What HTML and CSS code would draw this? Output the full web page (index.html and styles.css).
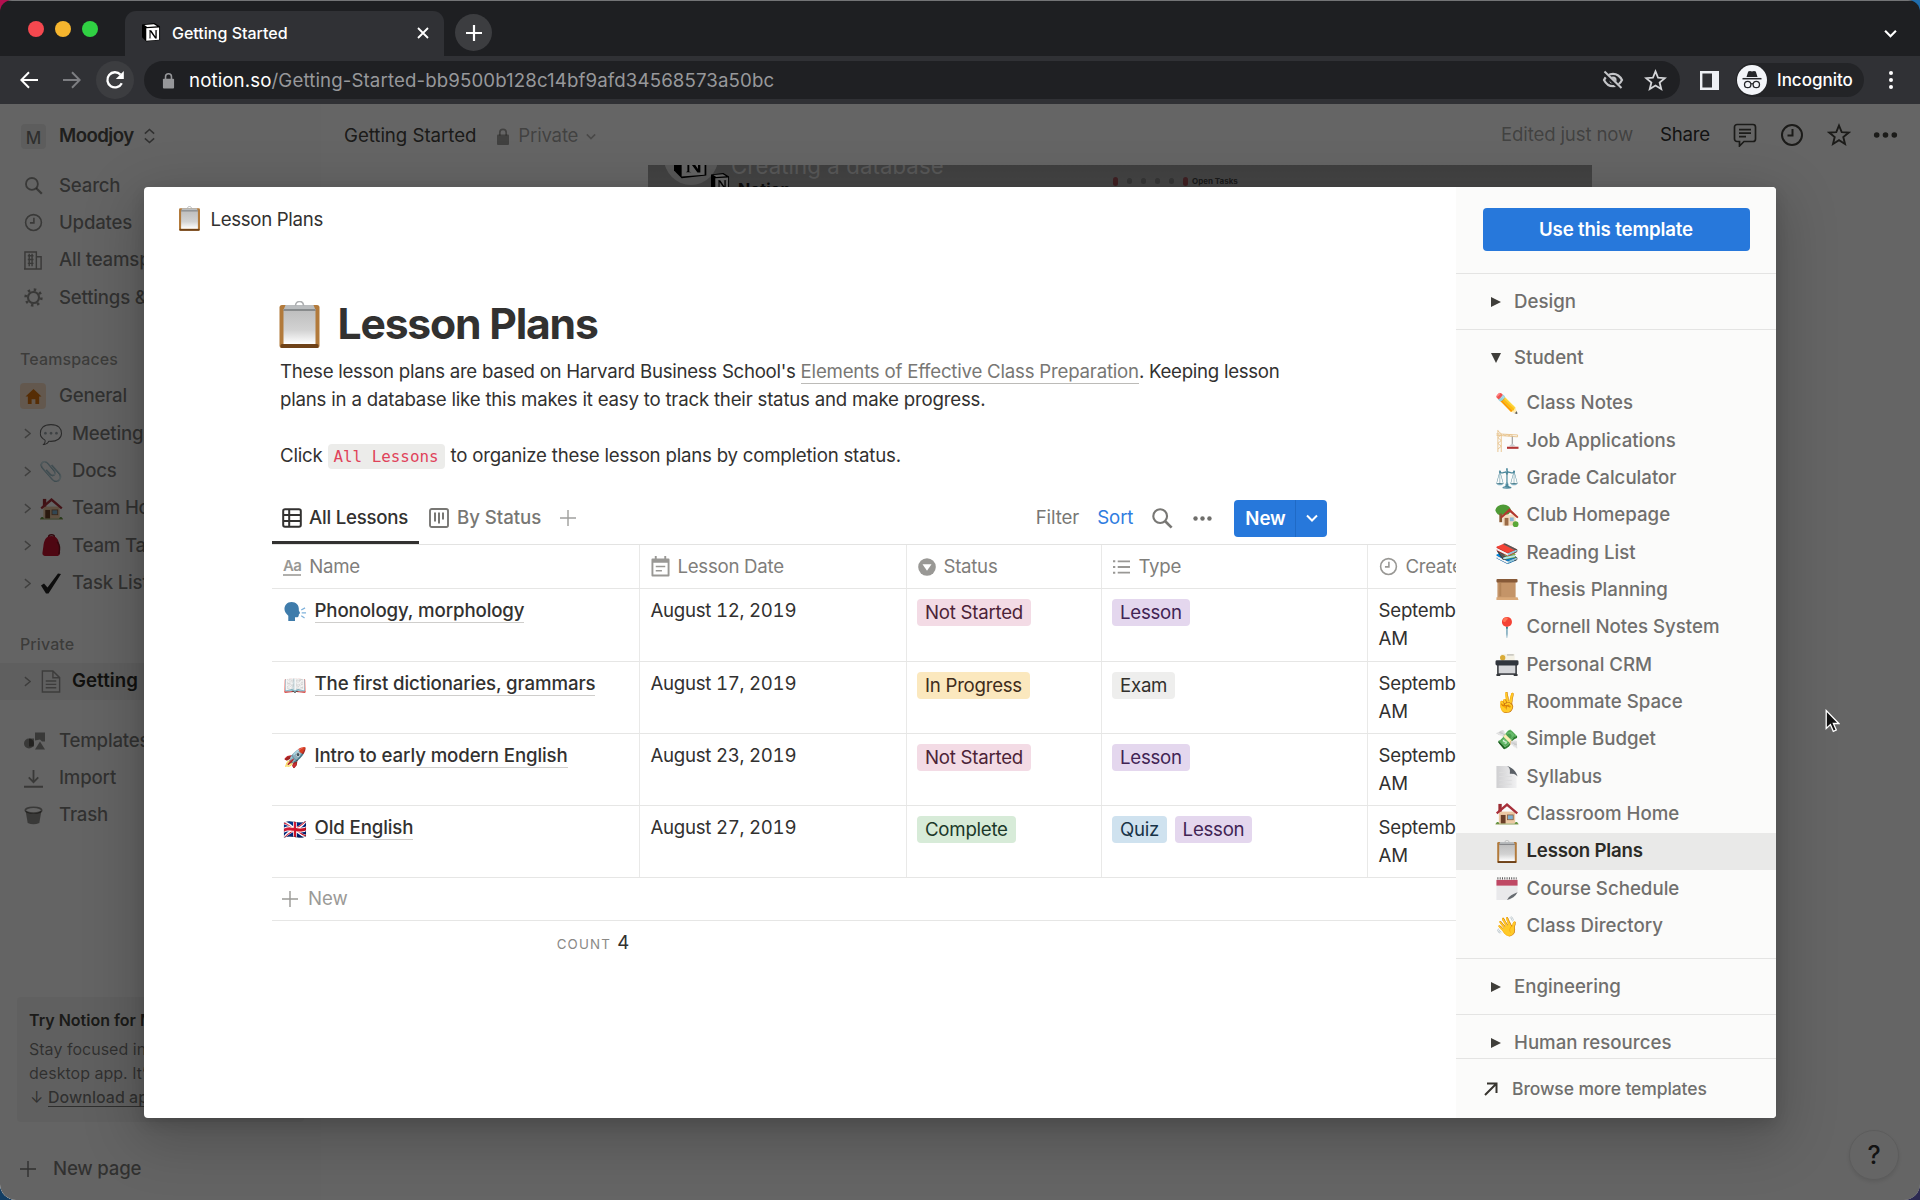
FILE: index.html
```html
<!DOCTYPE html>
<html lang="en">
<head>
<meta charset="utf-8">
<title>Getting Started</title>
<link rel="stylesheet" href="styles.css">
</head>
<body>
<svg class="defs" aria-hidden="true">
  <defs>
    <linearGradient id="paper" x1="0" y1="0" x2="0" y2="1"><stop offset="0" stop-color="#bdbdbd"/><stop offset=".6" stop-color="#d2d2d2"/><stop offset="1" stop-color="#fff"/></linearGradient>
    <linearGradient id="sheet" x1="0" y1="0" x2="1" y2="0"><stop offset="0" stop-color="#cfcfd1"/><stop offset="1" stop-color="#f1f1f2"/></linearGradient>
  </defs>
  <symbol id="clipboard" viewBox="0 0 40 47">
    <rect x="0" y="4" width="40" height="43" rx="2.5" fill="#b27a3b"/>
    <rect x="1" y="43" width="38" height="4" rx="1.5" fill="#6f4218"/>
    <rect x="4" y="8" width="32" height="35" fill="url(#paper)"/>
    <path d="M6 4h28l2 5H4z" fill="#b9bcbe"/><path d="M4 9h32" stroke="#55585a" stroke-width="1.2"/>
    <path d="M16 5c0-6 8-6 8 0" fill="none" stroke="#aeb0b2" stroke-width="1.6"/>
  </symbol>
  <symbol id="scroll" viewBox="0 0 24 24">
    <rect x="2" y="2" width="19" height="20" fill="#c49468"/><rect x="1" y="1" width="22" height="3.6" rx="1" fill="#875a38"/><path d="M1 20h22l1 3H1z" fill="#d9a878"/><path d="M5 5v14" stroke="#b38458" stroke-width="2"/>
  </symbol>
  <symbol id="cards" viewBox="0 0 24 24">
    <rect x="6" y="1" width="14" height="9" fill="#f4f1e4"/><circle cx="7.5" cy="5" r="2.8" fill="#d9ab36"/><path d="M12 2h7" stroke="#999" stroke-width=".8"/>
    <rect x="2.5" y="11" width="19" height="11" fill="#d5d6d9" stroke="#34373b" stroke-width="1.6"/><rect x="0" y="7.5" width="24" height="5.5" rx="1.5" fill="#30353c"/><path d="M1 23h4M19 23h4" stroke="#34373b" stroke-width="2"/>
  </symbol>
  <symbol id="curl" viewBox="0 0 24 24">
    <path d="M1 1h12l9 9v14H1z" fill="url(#sheet)"/><path d="M12 1c4 2 3 6 3 8 3 0 6 0 8 3-1-5-6-10-11-11z" fill="#5b6066"/><path d="M4 8h7M4 12h13M4 16h13M4 20h13" stroke="#dcdcde" stroke-width="1"/>
  </symbol>
  <symbol id="pad" viewBox="0 0 24 24">
    <path d="M1 3h22v13l-8 8H1z" fill="#e9e9eb"/><rect x="1" y="3" width="22" height="6" fill="#bf4864"/><path d="M2 1.5h20" stroke="#555" stroke-width="2.4" stroke-dasharray="1 1.4"/><path d="M12 24c2-4 6-6 11-8-2 4-6 7-11 8z" fill="#666b70"/>
  </symbol>
  <symbol id="crane" viewBox="0 0 24 24">
    <path d="M2.5 24V1M6 24V5M2.5 2L6 5M2.5 9L6 6M2.5 9L6 12M2.5 15L6 12M2.5 15L6 18M2.5 21L6 18M1 5l22 1.2v2L1 6.5M8 5.500l2 1.500 2-1.300 2 1.500 2-1.300 2 1.500" fill="none" stroke="#e8c48f" stroke-width="1"/>
    <path d="M17.500 8v10" stroke="#888" stroke-width="1"/><path d="M14 18l3.500-3 3.500 3z" fill="#c9cdd0"/><rect x="12" y="18.500" width="12" height="2.200" fill="#b23535"/>
  </symbol>
  <symbol id="house" viewBox="0 0 24 24">
    <rect x="3.500" y="10" width="17" height="12.500" fill="#ecc9a4"/><rect x="3" y="2" width="3.500" height="8" fill="#9c2c33"/><path d="M12 1l11.500 10-1.500 1.800L12 4.500 2 12.800.500 11z" fill="#a8303a"/><rect x="5.500" y="13.500" width="5" height="9" fill="#6b3f28"/><rect x="12.500" y="13.500" width="6" height="5" fill="#7fb0cf" stroke="#8a5a3a" stroke-width=".8"/><path d="M.5 23c0-3 3.500-3 3.500 0zM20 23c0-3 3.500-3 3.500 0z" fill="#4d8a2e"/><path d="M0 23h24" stroke="#8fa05a" stroke-width="1"/>
  </symbol>
  <symbol id="garden" viewBox="0 0 24 24">
    <ellipse cx="8" cy="6.500" rx="8" ry="6" fill="#4e9a35"/><path d="M4 10h3v9H4z" fill="#8a5a33"/><rect x="7.500" y="11" width="13.500" height="11.500" fill="#f3dcc0"/><path d="M14.500 4.500L24 13.500l-1.300 1.300L14.500 8 6.500 14.800 5.300 13.500z" fill="#b2382f"/><rect x="9.500" y="14.500" width="4" height="8" fill="#9b6a45"/><rect x="15" y="14" width="4" height="4" fill="#8ab7d6"/><circle cx="21" cy="21" r="3" fill="#5aa838"/>
  </symbol>
  <symbol id="talk" viewBox="0 0 24 24">
    <path d="M8.500 2C3.500 2 1 5.500 1 9.500c0 3 2 5 4 7V22h7v-4c3 .5 4-.5 4-3l1.300-1.500-1.300-2.500C16.500 5 13 2 8.500 2z" fill="#3f7cab"/><path d="M18.500 10.500l4-2.300M19 13.500h4.500M18.500 16.500l3.500 2.300" stroke="#7fb2dc" stroke-width="1.300"/>
  </symbol>
  <symbol id="notion" viewBox="0 0 20 20">
    <path d="M0 1.500L13 0l6 3.800V18l-14.500 1.500L0 15z" fill="#000"/><path d="M2.500 2.200l10-.8 3.500 2.100-10.500.7z" fill="#fff"/><path d="M4.500 5.500L18 4.800V17.500L4.500 18.600z" fill="#fff"/>
    <path d="M7 7.700h2.700l4.400 6.400V8l-1.300-.3h3.600l-.9.500v8h-1.700L9 9.600v6.100l1.300.4H7l.9-.6V8.200z" fill="#000"/>
  </symbol>
  <symbol id="star" viewBox="0 0 24 24"><path d="M12 2.500l2.700 6.600 7 .5-5.400 4.500 1.700 6.900-6-3.800-6 3.800 1.700-6.900L2.300 9.600l7-.5z" fill="none" stroke="currentColor" stroke-width="1.900" stroke-linejoin="miter"/></symbol>
  <symbol id="clock" viewBox="0 0 24 24"><circle cx="12" cy="12" r="10" fill="none" stroke="currentColor" stroke-width="2"/><path d="M12.500 6v6.500H7.500" fill="none" stroke="currentColor" stroke-width="2"/></symbol>
  <symbol id="search" viewBox="0 0 24 24"><circle cx="10" cy="10" r="7.500" fill="none" stroke="currentColor" stroke-width="2.300"/><path d="M15.500 15.500l7 7" stroke="currentColor" stroke-width="2.900"/></symbol>
  <symbol id="dots" viewBox="0 0 24 8"><g fill="currentColor"><circle cx="3.200" cy="4" r="2.800"/><circle cx="12" cy="4" r="2.800"/><circle cx="20.800" cy="4" r="2.800"/></g></symbol>
  <symbol id="plus" viewBox="0 0 18 18"><path d="M9 0v18M0 9h18" stroke="currentColor" stroke-width="1.600"/></symbol>
  <symbol id="right" viewBox="0 0 8 12"><path d="M1 1l6 5-6 5" fill="none" stroke="currentColor" stroke-width="1.500"/></symbol>
  <symbol id="down" viewBox="0 0 12 8"><path d="M1 1.500l5 5 5-5" fill="none" stroke="currentColor" stroke-width="2"/></symbol>
  <symbol id="lock" viewBox="0 0 14 18"><rect x="1" y="7" width="12" height="10.500" rx="1" fill="currentColor"/><path d="M3.800 8V5a3.200 3.200 0 0 1 6.400 0v3" fill="none" stroke="currentColor" stroke-width="1.700"/></symbol>
</svg>

<div class="window">
  <header class="tabstrip">
    <div class="lights"><i class="red"></i><i class="amber"></i><i class="green"></i></div>
    <div class="tab">
      <svg class="favicon"><use href="#notion"/></svg>
      <span>Getting Started</span>
      <svg class="tab-close" viewBox="0 0 12 12"><path d="M1 1l10 10M11 1L1 11" stroke="#fff" stroke-width="1.800"/></svg>
    </div>
    <div class="new-tab"><svg viewBox="0 0 16 16"><path d="M8 0v16M0 8h16" stroke="#fff" stroke-width="2.200"/></svg></div>
    <svg class="strip-chevron"><use href="#down"/></svg>
  </header>
  <div class="toolbar">
    <svg class="nav back" viewBox="0 0 18 18"><path d="M18 9H2M9 1.200L1.300 9 9 16.800" fill="none" stroke="#fff" stroke-width="2"/></svg>
    <svg class="nav forward" viewBox="0 0 18 18"><path d="M0 9h16M9 1.200L16.700 9 9 16.800" fill="none" stroke="#7d7e82" stroke-width="2"/></svg>
    <div class="reload"><svg viewBox="0 0 20 20"><path d="M16.800 13.200A7.600 7.600 0 1 1 15.500 4.600" fill="none" stroke="#fff" stroke-width="2.300"/><path d="M18.800 1v8h-8z" fill="#fff"/></svg></div>
    <div class="omnibox">
      <svg class="url-lock"><use href="#lock"/></svg>
      <span class="url"><b>notion.so</b>/Getting-Started-bb9500b128c14bf9afd34568573a50bc</span>
      <svg class="eye" viewBox="0 0 22 20"><path d="M2 10c2-4 5.500-6.200 9-6.200S18 6 20 10c-2 4-5.500 6.200-9 6.200S4 14 2 10z" fill="none" stroke="currentColor" stroke-width="2.200"/><circle cx="11" cy="10" r="3.600" fill="currentColor"/><path d="M1.500 2.500l17 16" stroke="#1f2023" stroke-width="4"/><path d="M2.500 1.500l17 16.500" stroke="currentColor" stroke-width="2"/></svg>
      <svg class="bookmark"><use href="#star"/></svg>
    </div>
    <svg class="panel-icon" viewBox="0 0 19 19"><path d="M1.200 1.200h16.600v16.600H1.200z" fill="none" stroke="#eef0f4" stroke-width="2.400"/><path d="M12 0h7v19h-7z" fill="#eef0f4"/></svg>
    <div class="profile">
      <svg viewBox="0 0 30 30"><circle cx="15" cy="15" r="15" fill="#f3f5f9"/><path d="M9.500 12l1.700-5.500 1.800-.5 2 .6 2-.6 1.800.5L20.500 12z" fill="#25272b"/><path d="M5.500 13.700h19" stroke="#25272b" stroke-width="1.500"/><g fill="none" stroke="#25272b" stroke-width="1.300"><circle cx="10.700" cy="19.500" r="3.200"/><circle cx="19.300" cy="19.500" r="3.200"/><path d="M13.900 19q1.100-.8 2.200 0"/></g></svg>
      <span>Incognito</span>
    </div>
    <svg class="kebab" viewBox="0 0 6 20"><g fill="#fff"><circle cx="3" cy="3" r="2"/><circle cx="3" cy="10" r="2"/><circle cx="3" cy="17" r="2"/></g></svg>
  </div>

  <div class="app">
    <aside class="sidebar">
      <div class="workspace"><span class="badge">M</span><strong>Moodjoy</strong>
        <svg viewBox="0 0 14 18"><path d="M2 6.500L7 2l5 4.500M2 11.500L7 16l5-4.500" fill="none" stroke="currentColor" stroke-width="1.700"/></svg></div>
      <div class="row"><svg class="ic"><use href="#search"/></svg>Search</div>
      <div class="row"><svg class="ic"><use href="#clock"/></svg>Updates</div>
      <div class="row"><svg class="ic" viewBox="0 0 20 20"><path d="M1 19V1h12v18zM13 6h5v13H0M4 5h6M4 9h6M4 13h6M5.500 3v13M8.500 3v13" fill="none" stroke="currentColor" stroke-width="1.500"/></svg>All teamspaces</div>
      <div class="row"><svg class="ic" viewBox="0 0 20 20"><circle cx="10" cy="10" r="5.800" fill="none" stroke="currentColor" stroke-width="2.200"/><circle cx="10" cy="10" r="8.300" fill="none" stroke="currentColor" stroke-width="2.700" stroke-dasharray="2.600 3.919"/></svg>Settings &amp; members</div>
      <div class="label">Teamspaces</div>
      <div class="row"><span class="home"><svg viewBox="0 0 18 18"><path d="M9 1l8.500 8H15v8h-4v-5H7v5H3V9H.5z" fill="#d9730d"/></svg></span>General</div>
      <div class="tree">
        <div class="row"><svg class="arrow"><use href="#right"/></svg><i class="emoji">💬</i>Meetings</div>
        <div class="row"><svg class="arrow"><use href="#right"/></svg><i class="emoji">📎</i>Docs</div>
        <div class="row"><svg class="arrow"><use href="#right"/></svg><svg class="emo"><use href="#house"/></svg>Team Home</div>
        <div class="row"><svg class="arrow"><use href="#right"/></svg><svg class="emo" viewBox="0 0 24 24"><path d="M9 3c0-3 6-3 6 0" fill="none" stroke="#7a1420" stroke-width="1.500"/><path d="M12 2C6 2 4 7 3.500 13L2.500 20c0 2.500 2 3 4 3h10c3 0 4.500-1 4.500-4L20 11c-.8-6-3-9-8-9z" fill="#c4122f"/><path d="M18 8c2.500 3 3 8 1.500 13" fill="none" stroke="#7a1420" stroke-width="1.500"/></svg>Team Tasks</div>
        <div class="row"><svg class="arrow"><use href="#right"/></svg><svg class="check" viewBox="0 0 22 22"><path d="M1 13l3-2 3.500 4L18 1l3 .5L8.500 21H6z" fill="#222"/></svg>Task List</div>
      </div>
      <div class="label private">Private</div>
      <div class="tree"><div class="row active"><svg class="arrow"><use href="#right"/></svg><svg class="page" viewBox="0 0 22 24"><path d="M2 1h11l7 7v15H2zM13 1v7h7M5.500 11.500h11M5.500 15h11M5.500 18.500h11" fill="none" stroke="currentColor" stroke-width="1.500"/></svg>Getting Started</div></div>
      <div class="row first-tool"><svg class="ic wide" viewBox="0 0 22 18"><path d="M11 1h10v9h-3l-2-2-5 1z" fill="currentColor"/><circle cx="5" cy="12" r="5" fill="currentColor"/><path d="M5 7h5v8H5zM16 10l5 8H11z" fill="currentColor"/></svg>Templates</div>
      <div class="row"><svg class="ic" viewBox="0 0 18 18"><path d="M9 1v11M4.500 8L9 12.500 13.500 8M0 16.800h18" fill="none" stroke="currentColor" stroke-width="1.700"/></svg>Import</div>
      <div class="row"><svg class="ic" viewBox="0 0 18 18"><ellipse cx="9" cy="4" rx="7.800" ry="2.800" fill="none" stroke="currentColor" stroke-width="1.600"/><path d="M1.500 4.500L3.500 16q5.500 2.500 11 0l2-11.500q-7.500 5-15 0z" fill="currentColor"/></svg>Trash</div>
      <div class="promo"><strong>Try Notion for Mac</strong><p>Stay focused in our fast<br>desktop app. It’s free.<br><span class="dl">↓</span><u>Download app</u></p></div>
      <div class="new-page"><svg><use href="#plus"/></svg>New page</div>
    </aside>

    <main class="page-area">
      <div class="topbar">
        <span class="crumb">Getting Started</span>
        <svg class="crumb-lock"><use href="#lock"/></svg><span class="faint">Private</span><svg class="crumb-down"><use href="#down"/></svg>
        <div class="actions">
          <span class="edited">Edited just now</span>
          <span class="share">Share</span>
          <svg class="tb" viewBox="0 0 24 24"><path d="M4 1.500h16a2.500 2.500 0 0 1 2.500 2.500v12a2.500 2.500 0 0 1-2.500 2.500H11L6.500 23v-4.500H4A2.500 2.500 0 0 1 1.500 16V4A2.500 2.500 0 0 1 4 1.500zM6 6.700h12M6 10.200h12M6 13.700h7" fill="none" stroke="currentColor" stroke-width="1.700"/></svg>
          <svg class="tb"><use href="#clock"/></svg>
          <svg class="tb"><use href="#star"/></svg>
          <svg class="tb-dots"><use href="#dots"/></svg>
        </div>
      </div>
      <div class="cover">
        <div class="avatar"><svg><use href="#notion"/></svg></div>
        <div class="cover-text"><span>Creating a database</span><b><svg><use href="#notion"/></svg>Notion</b></div>
        <div class="cover-bits"><i></i><i class="g"></i><i class="g"></i><i class="g"></i><i class="g"></i><i></i><b>Open Tasks</b></div>
      </div>
    </main>
    <div class="help">?</div>

    <div class="overlay">
      <section class="modal">
        <div class="preview">
          <div class="preview-head"><svg><use href="#clipboard"/></svg>Lesson Plans</div>
          <h1><svg><use href="#clipboard"/></svg>Lesson Plans</h1>
          <p class="intro">These lesson plans are based on Harvard Business School's <a>Elements of Effective Class Preparation</a>. Keeping lesson<br><span>plans in a database like this makes it easy to track their status and make progress.</span></p>
          <p class="hint">Click <code>All Lessons</code> to organize these lesson plans by completion status.</p>

          <div class="views">
            <div class="view current"><svg viewBox="0 0 20 20"><path d="M3 1.200h14A1.800 1.800 0 0 1 18.800 3v14a1.800 1.800 0 0 1-1.800 1.800H3A1.800 1.800 0 0 1 1.200 17V3A1.800 1.800 0 0 1 3 1.200zM1.200 7h17.600M1.200 13h17.600M7.200 1.200v17.600" fill="none" stroke="currentColor" stroke-width="2"/></svg>All Lessons</div>
            <div class="view"><svg viewBox="0 0 20 20"><rect x="1" y="1" width="18" height="18" rx="1.800" fill="none" stroke="currentColor" stroke-width="1.900"/><path d="M6 4.500v9M10 4.500v11M14 4.500v7" stroke="currentColor" stroke-width="2"/></svg>By Status</div>
            <svg class="add-view"><use href="#plus"/></svg>
            <span class="filter">Filter</span><span class="sort">Sort</span>
            <svg class="find"><use href="#search"/></svg><svg class="more"><use href="#dots"/></svg>
            <div class="new-btn"><span>New</span><i><svg><use href="#down"/></svg></i></div>
          </div>

          <div class="table">
            <div class="tr th">
              <div><span class="aa">Aa</span>Name</div>
              <div><svg viewBox="0 0 20 22"><path d="M1.500 3.500h17v17h-17z" fill="none" stroke="currentColor" stroke-width="2" stroke-linejoin="round"/><path d="M1.500 3h17v4h-17zM4 0h2v4H4zM14 0h2v4h-2z" fill="currentColor"/><path d="M5 11h10M5 15.500h6.500" stroke="currentColor" stroke-width="1.700"/></svg>Lesson Date</div>
              <div><svg class="sel" viewBox="0 0 18 18"><circle cx="9" cy="9" r="8.800" fill="currentColor"/><path d="M4.500 6.300h9L9 12.800z" fill="#fff"/></svg>Status</div>
              <div><svg class="list" viewBox="0 0 18 16"><path d="M5 2h13M5 8h13M5 14h13" stroke="currentColor" stroke-width="2"/><path d="M0 2h2.400M0 8h2.400M0 14h2.400" stroke="currentColor" stroke-width="2.200"/></svg>Type</div>
              <div><svg><use href="#clock"/></svg>Created</div>
            </div>
            <div class="tr lead"><div><svg class="emo"><use href="#talk"/></svg><span class="name">Phonology, morphology</span></div><div>August 12, 2019</div><div><span class="tag pink">Not Started</span></div><div><span class="tag purple">Lesson</span></div><div>September<br>AM</div></div>
            <div class="tr"><div><i class="emoji">📖</i><span class="name">The first dictionaries, grammars</span></div><div>August 17, 2019</div><div><span class="tag yellow">In Progress</span></div><div><span class="tag gray">Exam</span></div><div>September<br>AM</div></div>
            <div class="tr"><div><i class="emoji">🚀</i><span class="name">Intro to early modern English</span></div><div>August 23, 2019</div><div><span class="tag pink">Not Started</span></div><div><span class="tag purple">Lesson</span></div><div>September<br>AM</div></div>
            <div class="tr"><div><i class="emoji">🇬🇧</i><span class="name">Old English</span></div><div>August 27, 2019</div><div><span class="tag mint">Complete</span></div><div><span class="tag blue">Quiz</span><span class="tag purple">Lesson</span></div><div>September<br>AM</div></div>
            <div class="add-row"><svg><use href="#plus"/></svg>New</div>
            <div class="count"><span>COUNT</span>4</div>
          </div>
        </div>

        <nav class="gallery">
          <div class="cta"><button>Use this template</button></div>
          <div class="groups">
            <div class="group"><i class="tri"></i>Design</div>
            <div class="open">
              <div class="group"><i class="tri open-tri"></i>Student</div>
              <div class="item"><i class="emoji">✏️</i>Class Notes</div>
              <div class="item"><svg class="emo"><use href="#crane"/></svg>Job Applications</div>
              <div class="item"><i class="emoji">⚖️</i>Grade Calculator</div>
              <div class="item"><svg class="emo"><use href="#garden"/></svg>Club Homepage</div>
              <div class="item"><i class="emoji">📚</i>Reading List</div>
              <div class="item"><svg class="emo"><use href="#scroll"/></svg>Thesis Planning</div>
              <div class="item"><i class="emoji">📍</i>Cornell Notes System</div>
              <div class="item"><svg class="emo"><use href="#cards"/></svg>Personal CRM</div>
              <div class="item"><i class="emoji">✌️</i>Roommate Space</div>
              <div class="item"><i class="emoji">💸</i>Simple Budget</div>
              <div class="item"><svg class="emo"><use href="#curl"/></svg>Syllabus</div>
              <div class="item"><svg class="emo"><use href="#house"/></svg>Classroom Home</div>
              <div class="item chosen"><svg class="emo"><use href="#clipboard"/></svg>Lesson Plans</div>
              <div class="item"><svg class="emo"><use href="#pad"/></svg>Course Schedule</div>
              <div class="item"><i class="emoji">👋</i>Class Directory</div>
            </div>
            <div class="group"><i class="tri"></i>Engineering</div>
            <div class="group"><i class="tri"></i>Human resources</div>
          </div>
          <div class="browse"><svg viewBox="0 0 14 14"><path d="M1 13L12 2M3 1.500h9.500V11" fill="none" stroke="#37352f" stroke-width="2"/></svg>Browse more templates</div>
        </nav>
      </section>
    </div>
  </div>
</div>
<svg class="cursor" viewBox="0 0 15 24"><path d="M1.200 1.500v18l4.200-4 2.900 6.800 3-1.300-2.900-6.500h5.400z" fill="#111" stroke="#fff" stroke-width="1.300"/></svg>
</body>
</html>
```
FILE: styles.css
```css
* { box-sizing: border-box; }
body {
  margin: 0; width: 1920px; height: 1200px; overflow: hidden;
  font: 400 18.67px/28px Inter, "Liberation Sans", sans-serif; letter-spacing: -0.22px; color: #323130;
  background: linear-gradient(90deg, #b3104f 50%, #1f6dad 50%) top / 100% 50% no-repeat,
              linear-gradient(90deg, #133e63 50%, #2c2a52 50%) bottom / 100% 50% no-repeat;
}
svg { display: block; flex: none; }
.defs { position: absolute; width: 0; height: 0; }
i { font-style: normal; }

.window { height: 1200px; border-radius: 12px 12px 16px 16px; overflow: hidden; display: flex; flex-direction: column; }

/* browser chrome */
.tabstrip { height: 56px; flex: none; background: #1e1f22; border-top: 1px solid #737476; display: flex; align-items: center; color: #fff; }
.lights { display: flex; gap: 11px; margin: 0 28px 0 28px; height: 16px; }
.lights i { width: 16px; height: 16px; border-radius: 50%; }
.lights .red { background: #f5484f; }
.lights .amber { background: #f6b52e; }
.lights .green { background: #30d143; }
.tab { align-self: flex-end; width: 319px; height: 45px; margin-left: -1px; padding: 0 15px 2px 17px; border-radius: 11px 11px 0 0; background: #303135; display: flex; align-items: center; font-size: 16px; font-weight: 500; letter-spacing: 0; }
.favicon { width: 19px; height: 19px; margin-right: 11px; }
.tab-close { width: 12px; height: 12px; margin-left: auto; }
.new-tab { width: 37px; height: 37px; margin: 8px 0 0 11px; border-radius: 50%; background: #3c3d40; display: grid; place-items: center; }
.new-tab svg { width: 16px; height: 16px; }
.strip-chevron { width: 13px; height: 9px; margin: 9px 23px 0 auto; }
.toolbar { height: 48px; flex: none; background: #303135; display: flex; align-items: center; color: #fff; }
.nav { width: 18px; height: 18px; }
.back { margin-left: 20px; }
.forward { margin-left: 25px; }
.reload { width: 38px; height: 38px; margin-left: 15px; border-radius: 50%; background: #3c3d40; display: grid; place-items: center; }
.reload svg { width: 20px; height: 20px; }
.omnibox { width: 1536px; height: 38px; margin-left: 10px; padding: 0 13px 0 18px; border-radius: 19px; background: #1f2023; display: flex; align-items: center; }
.url-lock { width: 13px; height: 17px; color: #96979a; margin-right: 14px; }
.url { letter-spacing: .12px; color: #97989b; padding-top: 1px; }
.url b { font-weight: 400; color: #fff; }
.eye { width: 22px; height: 20px; color: #c4c5c8; margin-left: auto; }
.bookmark { width: 23px; height: 23px; color: #d4d5d8; margin-left: 20px; }
.panel-icon { width: 19px; height: 19px; margin-left: 20px; }
.profile { width: 128px; height: 34px; margin-left: 17px; padding-left: 1px; border-radius: 17px; background: #232427; display: flex; align-items: center; gap: 10px; font-size: 17px; font-weight: 500; letter-spacing: 0; }
.profile svg { width: 30px; height: 30px; }
.kebab { width: 6px; height: 20px; margin-left: 24px; }

/* workspace behind the dialog */
.app { position: relative; flex: 1; display: flex; background: #fff; min-height: 0; }
.sidebar { width: 321px; flex: none; background: #fbfbfb; padding-top: 1px; display: flex; flex-direction: column; color: rgba(25,24,22,.57); font-weight: 500; overflow: hidden; }
.workspace { height: 62px; display: flex; align-items: center; padding-left: 21px; }
.workspace strong { font-weight: 600; letter-spacing: -.55px; color: #504f4b; margin: 0 9px 0 13px; }
.workspace svg { width: 13px; height: 18px; }
.badge { width: 25px; height: 25px; border-radius: 4px; background: #ebebea; display: grid; place-items: center; font-size: 17px; }
.row { height: 37.33px; flex: none; display: flex; align-items: center; padding-left: 24px; white-space: nowrap; }
.ic { width: 19px; height: 19px; margin-right: 16px; color: rgba(25,23,17,.47); }
.ic.wide { width: 22px; margin-right: 13px; }
.label { height: 37px; margin-top: 24.500px; padding-left: 20px; line-height: 37px; font-size: 16px; letter-spacing: .1px; color: rgba(25,23,17,.46); }
.home { width: 26px; height: 26px; margin: 0 13px 0 -4px; border-radius: 4px; background: #f9dfc6; display: grid; place-items: center; }
.home svg { width: 17px; height: 17px; }
.arrow { width: 7px; height: 11px; margin-right: 8px; color: rgba(25,23,17,.4); }
.emoji { width: 24px; height: 24px; flex: none; display: grid; place-items: center; line-height: 24px; font-size: 19.200px; letter-spacing: 0; }
.emo { width: 23px; height: 23px; }
.tree .emoji { margin-right: 9px; }
.tree .emo { margin: 0 9px 0 1px; }
.check, .page { width: 22px; height: 23px; margin: 0 10px 0 1px; color: rgba(25,23,17,.4); }
.label.private { margin-top: 24px; }
.tree .row.active { background: #f0f0f0; color: #2d2b27; font-weight: 600; letter-spacing: .05px; word-spacing: 3px; }
.first-tool { margin-top: 22px; }
.promo { width: 287px; height: 125px; margin: auto 0 16px 17px; padding: 11px 0 0 12px; background: #f3f3f2; border-radius: 4px; font-size: 16px; line-height: 24px; }
.promo strong { display: block; font-weight: 600; letter-spacing: 0; color: #45443f; }
.promo p { margin: 5px 0 0; font-weight: 400; letter-spacing: .02px; }
.promo u { text-underline-offset: 3px; font-weight: 500; }
.dl { display: inline-block; width: 19px; padding-left: 1px; }
.new-page { height: 62px; flex: none; display: flex; align-items: center; padding-left: 20px; gap: 17px; }
.new-page svg { width: 16px; height: 16px; }

.page-area { flex: 1; display: flex; flex-direction: column; }
.topbar { height: 61px; padding: 3px 21px 0 23px; display: flex; align-items: center; color: #45443f; }
.crumb { letter-spacing: -.04px; }
.crumb-lock { width: 14px; height: 19px; margin: 0 8px 0 20px; color: rgba(55,53,47,.45); }
.faint, .edited { color: rgba(55,53,47,.45); }
.crumb-down { width: 10px; height: 7px; margin-left: 8px; color: rgba(55,53,47,.35); }
.actions { margin: 0 0 3px auto; display: flex; align-items: center; }
.edited { margin-right: 27px; letter-spacing: -.17px; }
.share { margin-right: 23px; color: #323130; }
.tb { width: 24px; height: 24px; margin-right: 23px; }
.tb-dots { width: 25px; height: 8px; margin-right: 1px; margin-left: -1px; }
.cover { width: 944px; height: 30px; margin-left: 327px; overflow: hidden; background: linear-gradient(#a0a0a0, #b4b4b4 24px); display: flex; align-items: flex-start; }
.avatar { width: 54px; height: 54px; margin: -34px 13px 0 16px; border-radius: 50%; background: #dedede; display: grid; place-items: end center; padding-bottom: 5px; }
.avatar svg { width: 34px; height: 36px; }
.cover-text { width: 382px; margin-top: -12px; display: flex; flex-direction: column; line-height: 26px; color: #dedede; font-size: 22.200px; letter-spacing: .1px; }
.cover-text b { display: flex; gap: 8px; margin-left: -20px; color: #222; font-size: 16px; line-height: 20px; }
.cover-text b svg { width: 19px; height: 19px; margin-top: -6px; }
.cover-bits { display: flex; align-items: center; gap: 9px; margin-top: 11px; height: 10px; font-size: 8px; color: #444; letter-spacing: 0; }
.cover-bits i { width: 5px; height: 9px; background: #a3525a; border-radius: 3px; }
.cover-bits i.g { background: #888; height: 6px; }
.cover-bits b { margin-left: -5px; white-space: nowrap; }
.help { position: absolute; right: 21px; bottom: 20px; width: 50px; height: 50px; border-radius: 50%; background: #fff; border: 1px solid #e8e8e8; box-shadow: 0 2px 4px rgba(0,0,0,.1); display: grid; place-items: center; font-size: 25px; font-weight: 500; }

/* dialog */
.overlay { position: absolute; inset: 0; background: rgba(0,0,0,.605); padding: 83px 144px 82px; }
.modal { height: 931px; background: #fff; border-radius: 4px; overflow: hidden; box-shadow: 0 6px 14px rgba(0,0,0,.12), 0 16px 56px 8px rgba(0,0,0,.2); display: flex; }
.preview { width: 1312px; flex: none; padding-left: 128px; overflow: hidden; }
.preview-head { height: 65px; margin-left: -93px; display: flex; align-items: center; gap: 10.500px; letter-spacing: -.33px; }
.preview-head svg { width: 21px; height: 25px; margin-top: -3px; }
h1 { margin: 46px 0 0 7px; height: 52px; display: flex; align-items: center; gap: 17.500px; font-size: 42.67px; line-height: 52px; font-weight: 700; letter-spacing: -1.2px; }
h1 svg { width: 41px; height: 47px; }
p { margin: 0; }
.intro { margin: 8px 0 0 8px; white-space: nowrap; letter-spacing: -.28px; }
.intro a { color: #787774; border-bottom: 1px solid #bcbbb8; letter-spacing: -.22px; }
.intro span { letter-spacing: -.21px; }
.hint { margin: 28px 0 0 8px; letter-spacing: -.22px; }
code { font: 15.87px "DejaVu Sans Mono", monospace; letter-spacing: 0; color: #e0435a; background: #ececea; border-radius: 4px; padding: 3px 6px; margin-right: 1px; }
.views { height: 53px; margin-top: 21.500px; border-bottom: 1px solid #e3e3e2; display: flex; align-items: center; letter-spacing: -.1px; padding-top: 1px; }
.view { height: 52px; display: flex; align-items: center; gap: 8px; padding: 0 11px 0 10px; color: #787774; font-weight: 500; letter-spacing: -.06px; white-space: nowrap; }
.view svg { width: 20px; height: 20px; }
.view.current { width: 147px; padding-right: 0; gap: 7px; color: #323130; letter-spacing: -.24px; border-bottom: 3px solid #323130; padding-top: 3px; }
.add-view { width: 16px; height: 16px; margin-left: 8px; color: #a0a09e; }
.filter { margin-left: 459.500px; color: #787774; }
.sort { margin-left: 18px; color: #2f7ce0; }
.find { width: 22px; height: 22px; margin-left: 18px; color: #787774; }
.more { width: 19px; height: 7px; margin-left: 20px; color: #6f6e6b; }
.new-btn { width: 93px; height: 37px; margin-left: 22px; border-radius: 4px; background: #2778db; color: #fff; font-weight: 600; display: flex; align-items: stretch; line-height: 37px; }
.new-btn span { width: 62px; padding-left: 11px; border-right: 1px solid #1f6ac6; }
.new-btn i { flex: 1; display: grid; place-items: center; }
.new-btn svg { width: 12px; height: 8px; }

.table { width: 1300px; }
.tr { height: 72px; display: grid; grid-template-columns: 367.500px 267px 195px 266px 204px; border-bottom: 1px solid #e6e6e5; }
.tr > div { padding: 8px 0 0 11px; border-right: 1px solid #e9e9e8; display: flex; align-items: flex-start; white-space: nowrap; }
.tr.th { height: 44.500px; color: #7f7e7b; }
.tr.th > div { padding: 1px 0 0 11px; align-items: center; gap: 8px; letter-spacing: -.28px; }
.th svg { width: 19px; height: 21px; color: #999895; }
.th .sel { width: 18px; height: 18px; }
.th .list { width: 17px; height: 16px; margin-right: 1px; }
.aa { font-weight: 600; font-size: 15px; line-height: 16px; color: #999895; border-bottom: 2px solid #b0afac; letter-spacing: -.6px; }
.tr.lead { height: 72.500px; }
.tr:not(.th) > div:first-child { padding-left: 12px; }
.tr:not(.th) > div:nth-child(2) { letter-spacing: -.28px; font-variant-numeric: tabular-nums; }
.tr > div > .emoji, .tr > div > .emo { margin: 3px 7.500px 0 -1px; width: 24px; }
.name { font-weight: 500; letter-spacing: -.12px; line-height: 23px; margin-top: 2px; border-bottom: 1px solid #cfcecc; }
.tag { height: 27px; margin: 2px 8px 0 -.5px; padding: 0 8px; border-radius: 4px; line-height: 27px; letter-spacing: -.26px; color: #32302c; }
.pink { background: #f3dbe5; color: #4c2337; }
.purple { background: #e4d7ee; color: #412454; }
.yellow { background: #fbe8be; color: #402c1b; }
.gray { background: #eeeeed; }
.mint { background: #d7ebd8; color: #1c3829; }
.blue { background: #cfe2ef; color: #183347; }
.add-row { height: 43px; border-bottom: 1px solid #e6e6e5; display: flex; align-items: center; gap: 10px; padding: 1px 0 0 10px; color: #9b9a97; letter-spacing: -.1px; }
.add-row svg { width: 16px; height: 16px; }
.count { width: 357px; height: 44px; display: flex; align-items: center; justify-content: flex-end; gap: 6px; }
.count span { font-size: 13.33px; letter-spacing: 1.200px; color: #8a8986; padding-top: 2px; }

.gallery { flex: 1; background: #fbfbfa; display: flex; flex-direction: column; color: #706f6d; font-weight: 500; letter-spacing: 0; }
.cta { height: 87px; flex: none; padding: 21px 27px 0 26.500px; border-bottom: 1px solid #e4e4e3; }
.cta button { display: block; width: 267px; height: 43px; border: 0; border-radius: 4px; background: #2778db; color: #fff; font: 600 18.67px/44px Inter, sans-serif; letter-spacing: -.15px; padding: 0; }
.groups { height: 784px; overflow: hidden; }
.group { height: 56px; display: flex; align-items: center; padding-left: 35px; border-bottom: 1px solid #e4e4e3; }
.open .group { border: 0; height: 56px; margin-bottom: -1.400px; }
.open { height: 629px; border-bottom: 1px solid #e4e4e3; }
.tri { width: 0; height: 0; margin-right: 13px; border: 5.500px solid transparent; border-left: 10px solid #3f3e3a; border-right: 0; }
.open-tri { border: 5.500px solid transparent; border-top: 10px solid #3f3e3a; border-bottom: 0; margin-right: 13px; }
.item { height: 37.33px; display: flex; align-items: center; gap: 8px; padding-left: 38.500px; }
.item .emo, .item .emoji { width: 24px; }
.chosen { background: #e9e9e8; color: #2b2a26; font-weight: 600; letter-spacing: -.22px; }
.browse { height: 60px; border-top: 1px solid #e4e4e3; display: flex; align-items: center; gap: 14px; padding-left: 28px; font-size: 17.5px; letter-spacing: -.1px; }
.browse svg { width: 14px; height: 14px; }
.cursor { position: absolute; left: 1825px; top: 709px; width: 15px; height: 24px; }
```
